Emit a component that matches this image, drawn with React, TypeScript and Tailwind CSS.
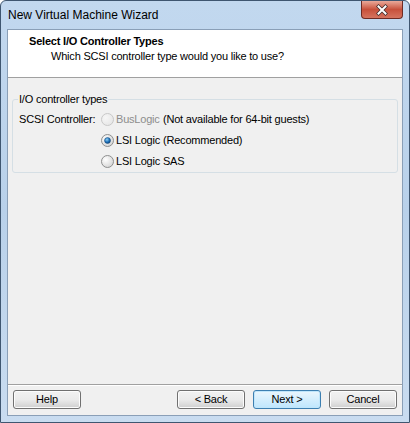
import React from "react";

const font = { fontFamily: "'Liberation Sans', Arial, sans-serif" };

function Radio({ checked, disabled }: { checked?: boolean; disabled?: boolean }) {
  const id = checked ? "rg1" : disabled ? "rg3" : "rg2";
  return (
    <svg width="13" height="13" viewBox="0 0 13 13" className="shrink-0">
      <defs>
        <radialGradient id={id} cx="0.35" cy="0.35" r="0.8">
          <stop offset="0" stopColor={disabled ? "#f6f6f6" : "#ffffff"} />
          <stop offset="1" stopColor={disabled ? "#e4e4e4" : "#cfcfcf"} />
        </radialGradient>
        <radialGradient id={`dot${id}`} cx="0.4" cy="0.35" r="0.7">
          <stop offset="0" stopColor="#8fd0f5" />
          <stop offset="0.6" stopColor="#1b6fb8" />
          <stop offset="1" stopColor="#0b3f73" />
        </radialGradient>
      </defs>
      <circle cx="6.5" cy="6.5" r="6" fill={`url(#${id})`} stroke={disabled ? "#c8c8c8" : "#8e8f8f"} strokeWidth="1" />
      {checked && <circle cx="6.5" cy="6.5" r="3" fill={`url(#dot${id})`} stroke="#1a4a7a" strokeWidth="0.5" />}
    </svg>
  );
}

function Btn({ label, def }: { label: string; def?: boolean }) {
  return (
    <div
      className={`w-[68px] h-[19px] rounded-[3px] border flex items-center justify-center text-[11px] text-black whitespace-nowrap ${
        def
          ? "border-[#3c7fb1] bg-gradient-to-b from-[#eaf6fd] to-[#bee6fd] shadow-[inset_0_0_0_1px_#c0e6fb]"
          : "border-[#707070] bg-gradient-to-b from-[#f2f2f2] via-[#ebebeb] to-[#cfcfcf] shadow-[inset_0_0_0_1px_#fcfcfc]"
      }`}
    >
      {label}
    </div>
  );
}

export default function App() {
  return (
    <div className="w-[410px] h-[423px] overflow-hidden tracking-[-0.2px]" style={font}>
      <div className="w-[410px] h-[423px] rounded-t-[6px] border border-[#3f5670] bg-gradient-to-b from-[#c2d8ef] via-[#b9d1ea] to-[#c9dcf0] flex flex-col">
        {/* title bar */}
        <div className="h-[28px] flex items-start justify-between shrink-0">
          <div className="pl-[7px] pt-[5px] text-[12px] text-black whitespace-nowrap tracking-normal">New Virtual Machine Wizard</div>
          <div className="mr-[6px] w-[42px] h-[18px] rounded-b-[4px] border border-t-0 border-[#6e2b24] bg-gradient-to-b from-[#e9a99a] via-[#c7503b] to-[#d5735f] flex items-center justify-center">
            <svg width="14" height="12" viewBox="0 0 14 12">
              <path d="M3.5 2.5 L10.5 9.5 M10.5 2.5 L3.5 9.5" stroke="#3a2a2a" strokeWidth="3.4" strokeLinecap="square" />
              <path d="M3.5 2.5 L10.5 9.5 M10.5 2.5 L3.5 9.5" stroke="#ffffff" strokeWidth="2" strokeLinecap="square" />
            </svg>
          </div>
        </div>
        {/* client */}
        <div className="mx-[6px] mb-[6px] flex-1 flex flex-col border border-[#8a9fb7] bg-[#f0f0f0]">
          <div className="h-[48px] bg-white border-b border-[#a0a0a0] shrink-0 pl-[21px] pt-[5px] whitespace-nowrap">
            <div className="text-[11px] font-bold text-black leading-[13px]">Select I/O Controller Types</div>
            <div className="text-[11px] text-black leading-[13px] pl-[22px] mt-[2px]">Which SCSI controller type would you like to use?</div>
          </div>
          <div className="flex-1 px-[4px] pt-[21px]">
            <div className="relative border border-[#d5dfe5] rounded-[3px] pt-[13px] pb-[4px] px-[6px]">
              <div className="absolute -top-[8px] left-[5px] bg-[#f0f0f0] px-[1px] text-[11px] text-black leading-[14px] whitespace-nowrap">
                I/O controller types
              </div>
              <div className="flex flex-col gap-[8px] text-[11px] text-black leading-[13px] whitespace-nowrap">
                <div className="flex items-center">
                  <div className="w-[82px]">SCSI Controller:</div>
                  <Radio disabled />
                  <div className="ml-[2px] w-[47px] text-[#8d8d8d]">BusLogic</div>
                  <div>(Not available for 64-bit guests)</div>
                </div>
                <div className="flex items-center">
                  <div className="w-[82px]" />
                  <Radio checked />
                  <div className="ml-[2px] w-[47px]">LSI Logic</div>
                  <div>(Recommended)</div>
                </div>
                <div className="flex items-center">
                  <div className="w-[82px]" />
                  <Radio />
                  <div className="ml-[2px]">LSI Logic SAS</div>
                </div>
              </div>
            </div>
          </div>
          <div className="shrink-0 border-t border-[#a0a0a0] shadow-[inset_0_1px_0_#ffffff] h-[31px] flex items-center px-[5px] pb-[1px]">
            <Btn label="Help" />
            <div className="flex-1" />
            <div className="flex gap-[8px]">
              <Btn label="< Back" />
              <Btn label="Next >" def />
              <Btn label="Cancel" />
            </div>
          </div>
        </div>
      </div>
    </div>
  );
}
